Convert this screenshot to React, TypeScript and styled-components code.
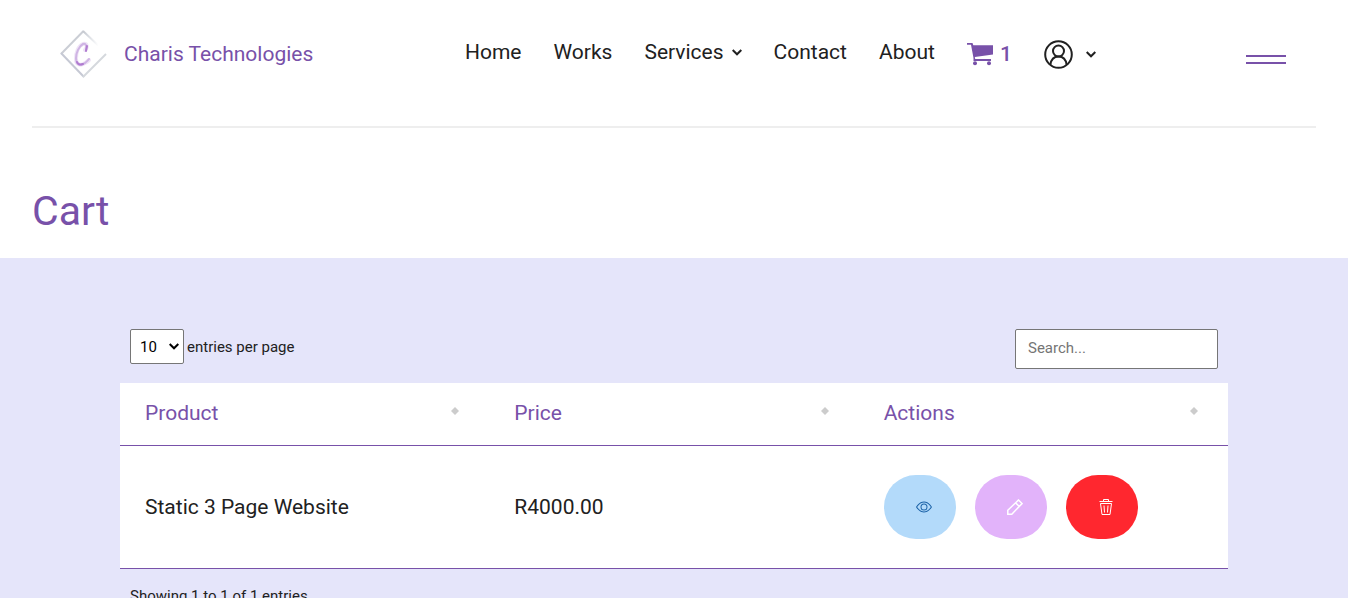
import React from 'react';
import styled, { createGlobalStyle } from 'styled-components';
import { BsEye } from 'react-icons/bs';

const purple = '#7851a9';
const ink = '#212121';

const GlobalStyle = createGlobalStyle`
  *, *::before, *::after { box-sizing: border-box; }
  html { background: #fff; overflow-x: hidden; scrollbar-width: none; }
  body {
    margin: 0;
    color: ${ink};
    font-family: Roboto, "Liberation Sans", sans-serif;
    font-size: 21px;
    line-height: 30px;
  }
  button, input, select { font-family: inherit; }
  a { color: inherit; text-decoration: none; }
`;

const Top = styled.div`
  padding: 0 32px;
`;

const Header = styled.header`
  display: flex;
  align-items: center;
  height: 128px;
  padding: 0 30px 18px 27px;
  border-bottom: 2px solid #eeeeee;
`;

const Brand = styled.a`
  display: flex;
  align-items: center;
  gap: 17px;
  flex: 0 0 406px;
  color: ${purple};
`;

const Nav = styled.nav`
  display: flex;
  align-items: center;
  gap: 32px;
  flex: 1;
  height: 36px;
`;

const NavLink = styled.a`
  display: flex;
  align-items: center;
  gap: 8px;
  padding-bottom: 4px;
`;

const CartLink = styled.a`
  display: flex;
  align-items: center;
  gap: 6px;
  color: ${purple};
  font-weight: 500;
`;

const PlainButton = styled.button`
  display: flex;
  align-items: center;
  gap: 13px;
  padding: 0;
  border: 0;
  background: none;
  color: ${ink};
`;

const MenuButton = styled.button`
  width: 40px;
  height: 9px;
  margin-top: 10px;
  padding: 0;
  border: solid ${purple};
  border-width: 2px 0;
  background: none;
`;

const Title = styled.h1`
  margin: 0;
  padding: 58px 0 22px;
  color: ${purple};
  font-size: 41px;
  font-weight: 400;
  line-height: 50px;
`;

const Band = styled.main`
  padding: 71px 120px 60px;
  background: #e5e5fa;
`;

const Toolbar = styled.div`
  display: flex;
  justify-content: space-between;
  align-items: flex-start;
  height: 54px;
  padding: 0 10px;
  font-size: 15px;
`;

const PageSize = styled.label`
  display: flex;
  align-items: center;
  gap: 3px;
`;

const SelectBox = styled.span`
  position: relative;
  display: flex;
`;

const Select = styled.select`
  width: 54px;
  height: 35px;
  padding: 0 9px;
  border: 1px solid #767676;
  border-radius: 2px;
  background: #fff;
  color: #000;
  font-size: 15px;
  appearance: none;
`;

const SelectArrow = styled.span`
  position: absolute;
  right: 5px;
  top: 0;
  display: flex;
  align-items: center;
  height: 100%;
  color: #000;
  pointer-events: none;
`;

const Search = styled.input`
  width: 203px;
  height: 40px;
  padding: 0 12px 2px;
  border: 1px solid #767676;
  border-radius: 2px;
  background: #fff;
  color: ${ink};
  font-size: 15px;
  &::placeholder { color: #757575; opacity: 1; }
`;

const Table = styled.table`
  width: 100%;
  table-layout: fixed;
  border-spacing: 0;
  background: #fff;
`;

const HeadCell = styled.th`
  height: 63px;
  padding: 0 30px 2px 25px;
  border-bottom: 1px solid ${purple};
  color: ${purple};
  font-weight: 400;
  text-align: left;
`;

const SortButton = styled.button`
  display: flex;
  align-items: center;
  justify-content: space-between;
  width: 100%;
  padding: 0;
  border: 0;
  background: none;
  color: inherit;
  font-size: 21px;
  line-height: 30px;
`;

const Cell = styled.td`
  height: 123px;
  padding: 0 25px;
  border-bottom: 1px solid ${purple};
`;

const Actions = styled.div`
  display: flex;
  gap: 19px;
`;

const ActionButton = styled.button<{ $bg: string; $fg: string }>`
  display: flex;
  align-items: center;
  justify-content: center;
  width: 72px;
  height: 64px;
  padding: 0 0 0 8px;
  border: 0;
  border-radius: 32px;
  background: ${p => p.$bg};
  color: ${p => p.$fg};
`;

const Info = styled.p`
  margin: 0;
  padding: 12px 10px;
  font-size: 15px;
`;

const Logo = () => (
  <svg width="48" height="50" viewBox="0 0 48 50" fill="none" aria-hidden="true">
    <defs>
      <linearGradient id="edge" x1="0" y1="0" x2="1" y2="0">
        <stop offset="0" stopColor="#c3c7ce" />
        <stop offset="0.35" stopColor="#dcdfe4" />
        <stop offset="0.85" stopColor="#ffffff" />
      </linearGradient>
    </defs>
    <path d="M24.500 2L2 25" stroke="#cbced5" strokeWidth="2" />
    <path d="M24 2L42 19" stroke="url(#edge)" strokeWidth="2" />
    <path d="M2 24L25 48" stroke="#c6c9d4" strokeWidth="2" />
    <path d="M24 48L47 25" stroke="#d5d8dd" strokeWidth="2" />
    <path d="M26 21C29 18 28 14 24 15C19 17 17 24 17 30C17 36 22 37 26 34C28 33 29 32 30 31" stroke="#efe4f6" strokeWidth="4" strokeLinecap="round" />
    <path d="M27 21C28 17 27 14 24 15C20 17 17 24 17 29C17 35 20 37 24 35C27 34 28 32 30 30" stroke="#cfb4e4" strokeWidth="2" strokeLinecap="round" />
    <path d="M27 22L28 17M18 33C19 36 21 36 24 35" stroke="#b07bd0" strokeWidth="2" strokeLinecap="round" />
  </svg>
);

const Chevron = () => (
  <svg width="10" height="7" viewBox="0 0 10 7" fill="none" stroke="currentColor" strokeWidth="2" aria-hidden="true">
    <path d="M.7 1L5 5.300L9.300 1" />
  </svg>
);

const CartIcon = () => (
  <svg width="27" height="23" viewBox="0 0 27 23" fill="currentColor" aria-hidden="true">
    <path d="M0 0H5.500L6.300 2.200H26V11.500L7.800 14L8.200 16H24V18H6.500V15L4 1.700H0Z" />
    <circle cx="8" cy="20.300" r="2" />
    <circle cx="22" cy="20.300" r="2" />
  </svg>
);

const UserIcon = () => (
  <svg width="29" height="29" viewBox="0 0 29 29" fill="none" stroke="currentColor" strokeWidth="2" aria-hidden="true">
    <circle cx="14.500" cy="14.500" r="13.300" />
    <circle cx="14.500" cy="11" r="5.500" />
    <path d="M6.300 25C7 20 10 16.600 14.500 16.600S22 20 22.700 25" />
  </svg>
);

const Diamond = () => (
  <svg width="8" height="12" viewBox="0 0 8 12" fill="#cccccc" aria-hidden="true">
    <path d="M4 0L8 4L4 8L0 4Z" />
  </svg>
);

const Pencil = () => (
  <svg width="16" height="16" viewBox="0 0 16 16" fill="none" stroke="currentColor" strokeWidth="1.500" aria-hidden="true">
    <path d="M.8 15.200V11.200L11.500 1L15 4.600L4.800 15.200ZM8.600 3.900L12 7.300" />
  </svg>
);

const Trash = () => (
  <svg width="16" height="16" viewBox="0 0 16 16" fill="none" stroke="currentColor" aria-hidden="true">
    <path d="M5.500 2.500V.5H10.500V2.500M1.500 2.500H14.500M2.500 4.500H13.500L12 15.500H4L2.500 4.500M6 6.500L6.500 13.500M10 6.500L9.500 13.500" />
  </svg>
);

export default function App() {
  return (
    <>
      <GlobalStyle />
      <Top>
        <Header>
          <Brand href="#home"><Logo />Charis Technologies</Brand>
          <Nav aria-label="Main">
            <NavLink href="#home">Home</NavLink>
            <NavLink href="#works">Works</NavLink>
            <NavLink href="#services">Services<Chevron /></NavLink>
            <NavLink href="#contact">Contact</NavLink>
            <NavLink href="#about">About</NavLink>
            <CartLink href="#cart"><CartIcon />1</CartLink>
            <PlainButton type="button" aria-label="Account"><UserIcon /><Chevron /></PlainButton>
          </Nav>
          <MenuButton type="button" aria-label="Menu" />
        </Header>
        <Title>Cart</Title>
      </Top>
      <Band>
        <Toolbar>
          <PageSize>
            <SelectBox>
              <Select defaultValue="10">
                <option>10</option>
                <option>25</option>
                <option>50</option>
              </Select>
              <SelectArrow><Chevron /></SelectArrow>
            </SelectBox>
            entries per page
          </PageSize>
          <Search type="search" placeholder="Search..." aria-label="Search" />
        </Toolbar>
        <Table>
          <thead>
            <tr>
              {['Product', 'Price', 'Actions'].map(name => (
                <HeadCell key={name} scope="col">
                  <SortButton type="button">{name}<Diamond /></SortButton>
                </HeadCell>
              ))}
            </tr>
          </thead>
          <tbody>
            <tr>
              <Cell>Static 3 Page Website</Cell>
              <Cell>R4000.00</Cell>
              <Cell>
                <Actions>
                  <ActionButton type="button" $bg="#b3dafa" $fg="#1c63a8" aria-label="View"><BsEye size={16} /></ActionButton>
                  <ActionButton type="button" $bg="#e2b3fa" $fg="#fff" aria-label="Edit"><Pencil /></ActionButton>
                  <ActionButton type="button" $bg="#ff272f" $fg="#fff" aria-label="Delete"><Trash /></ActionButton>
                </Actions>
              </Cell>
            </tr>
          </tbody>
        </Table>
        <Info>Showing 1 to 1 of 1 entries</Info>
      </Band>
    </>
  );
}
